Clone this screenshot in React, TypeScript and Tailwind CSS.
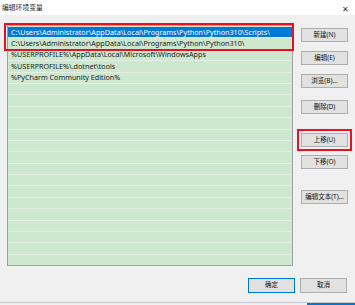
import React from "react";

const rows = [
  "C:\\Users\\Administrator\\AppData\\Local\\Programs\\Python\\Python310\\Scripts\\",
  "C:\\Users\\Administrator\\AppData\\Local\\Programs\\Python\\Python310\\",
  "%USERPROFILE%\\AppData\\Local\\Microsoft\\WindowsApps",
  "%USERPROFILE%\\.dotnet\\tools",
  "%PyCharm Community Edition%",
];

const font = {
  fontFamily: '"Noto Sans", "Noto Sans CJK SC", sans-serif',
};

function Btn({ label, className = "" }: { label: string; className?: string }) {
  return (
    <div
      className={`w-[47px] h-[14px] flex items-center justify-center bg-[#e1e1e1] border border-[#adadad] text-[6.5px] text-[#111] leading-none ${className}`}
    >
      {label}
    </div>
  );
}

export default function App() {
  const empty = Array.from({ length: 16 });
  return (
    <div
      className="relative w-[355px] h-[305px] bg-[#f0f0f0] overflow-hidden flex flex-col"
      style={font}
    >
      {/* title bar */}
      <div className="h-[15px] bg-white flex items-center justify-between pl-[2px] pr-[6px] pt-[2px] shrink-0">
        <span className="text-[6.8px] text-[#222] leading-none">编辑环境变量</span>
        <span className="text-[8px] text-[#333] leading-none">✕</span>
      </div>

      <div className="flex flex-1">
        {/* list */}
        <div className="relative ml-[7px] mt-[10px] w-[286px] h-[241px] border border-[#a0a0a0] bg-[#cde8cf] overflow-hidden flex flex-col pt-[1px]">
          {rows.map((r, i) => (
            <div
              key={i}
              className={`h-[11.4px] shrink-0 flex items-center pl-[3px] text-[7.2px] leading-none border-b border-[#e3efe3] whitespace-nowrap ${
                i === 0 ? "bg-[#0078d7] text-white" : "text-[#1a1a1a]"
              }`}
            >
              {r}
            </div>
          ))}
          {empty.map((_, i) => (
            <div key={i} className="h-[11.4px] shrink-0 border-b border-[#e3efe3]" />
          ))}
        </div>

        {/* buttons */}
        <div className="ml-[8px] mt-[13px] flex flex-col">
          <Btn label="新建(N)" />
          <Btn label="编辑(E)" className="mt-[9px]" />
          <Btn label="浏览(B)..." className="mt-[9px]" />
          <Btn label="删除(D)" className="mt-[12px]" />
          <div className="mt-[15px] -ml-[4px] p-[2px] border-2 border-[#e81123] w-fit">
            <Btn label="上移(U)" />
          </div>
          <Btn label="下移(O)" className="mt-[4px]" />
          <Btn label="编辑文本(T)..." className="mt-[21px]" />
        </div>
      </div>

      {/* bottom buttons */}
      <div className="flex justify-end gap-[5px] pr-[8px] pb-[9px] shrink-0">
        <div className="w-[47px] h-[15px] flex items-center justify-center bg-[#e1e1e1] border border-[#0078d7] text-[6.5px] leading-none text-[#111]">
          确定
        </div>
        <div className="w-[47px] h-[15px] flex items-center justify-center bg-[#e1e1e1] border border-[#adadad] text-[6.5px] leading-none text-[#111]">
          取消
        </div>
      </div>

      {/* bottom edge */}
      <div className="h-[1px] bg-[#c8c8c8] shrink-0" />
      <div className="h-[2px] flex shrink-0">
        <div className="flex-1" />
        <div className="w-[48px] bg-[#0078d7]" />
      </div>

      {/* red highlight over first two rows */}
      <div className="absolute left-[4px] top-[23px] w-[290px] h-[28px] border-2 border-[#e81123] pointer-events-none" />
    </div>
  );
}
